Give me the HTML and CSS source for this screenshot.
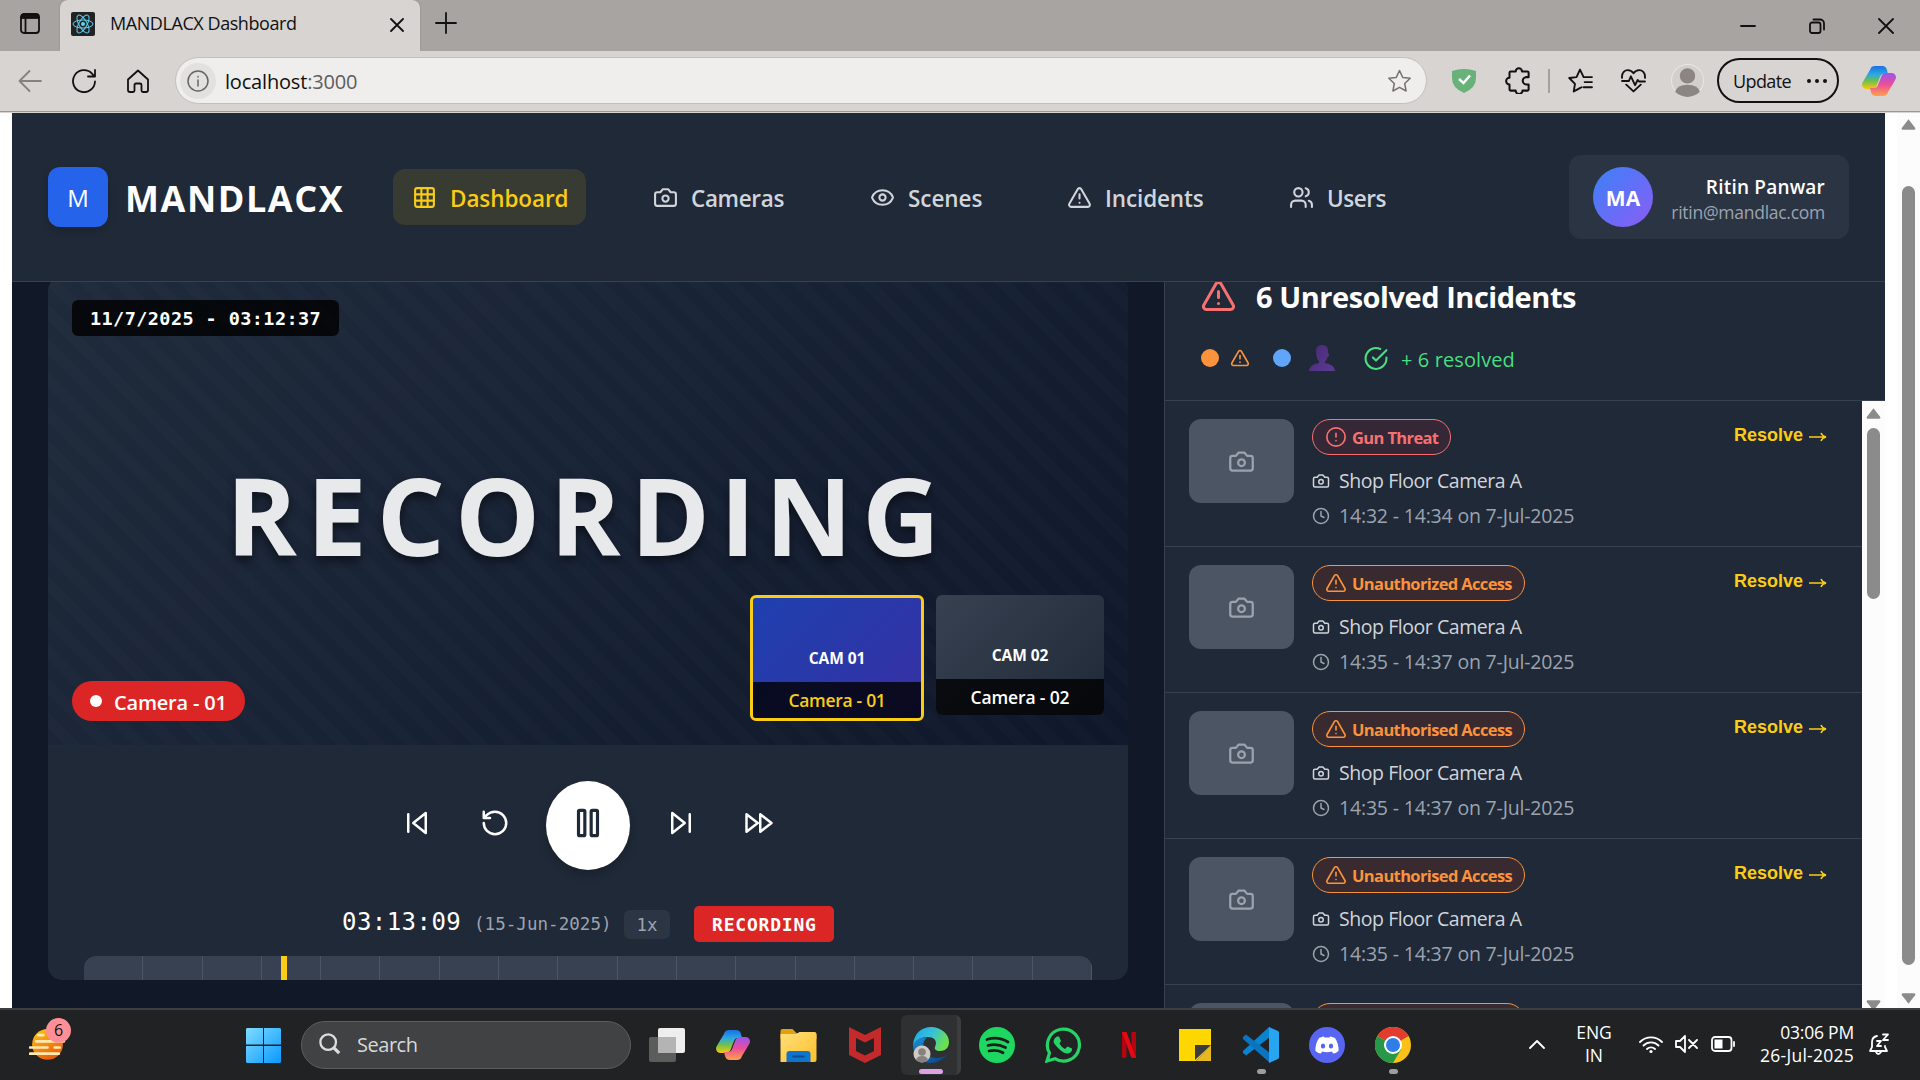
FILE: index.html
```html
<!DOCTYPE html>
<html lang="en">
<head>
<meta charset="utf-8">
<title>MANDLACX Dashboard</title>
<link rel="stylesheet" href="styles.css">
</head>
<body>
<svg class="defs" width="0" height="0">
  <defs>
    <linearGradient id="cpA" x1="0" y1="0" x2="0" y2="1"><stop offset="0" stop-color="#1b6fe0"/><stop offset=".35" stop-color="#2aa6e8"/><stop offset=".65" stop-color="#6fc04c"/><stop offset="1" stop-color="#fbc80c"/></linearGradient>
    <linearGradient id="cpB" x1="0" y1="0" x2="0" y2="1"><stop offset="0" stop-color="#9a54f0"/><stop offset=".5" stop-color="#ea4f97"/><stop offset="1" stop-color="#ffa14a"/></linearGradient>
    <linearGradient id="edA" x1="0" y1="0" x2="1" y2=".4"><stop offset="0" stop-color="#1ea7e8"/><stop offset=".55" stop-color="#35c1d8"/><stop offset="1" stop-color="#6be04f"/></linearGradient>
    <linearGradient id="edB" x1="0" y1="0" x2="1" y2="1"><stop offset="0" stop-color="#1a8fd8"/><stop offset="1" stop-color="#0c3f80"/></linearGradient>
    <linearGradient id="winG" x1="0" y1="0" x2="1" y2="1"><stop offset="0" stop-color="#7fdcff"/><stop offset="1" stop-color="#0a98ff"/></linearGradient>
    <linearGradient id="sunG" x1="0" y1="0" x2=".5" y2="1"><stop offset="0" stop-color="#ffc814"/><stop offset="1" stop-color="#e8600c"/></linearGradient>
    <linearGradient id="foldG" x1="0" y1="0" x2="1" y2="1"><stop offset="0" stop-color="#ffe07a"/><stop offset="1" stop-color="#ffbe2c"/></linearGradient>
    <linearGradient id="bustG" x1="0" y1="0" x2="1" y2="1"><stop offset="0" stop-color="#4a2a72"/><stop offset="1" stop-color="#5c3a94"/></linearGradient>
    <symbol id="camera" viewBox="0 0 24 24"><path d="M14.500 4h-5L7 7H4a2 2 0 0 0-2 2v9a2 2 0 0 0 2 2h16a2 2 0 0 0 2-2V9a2 2 0 0 0-2-2h-3l-2.500-3z"/><circle cx="12" cy="13" r="3"/></symbol>
    <symbol id="warn" viewBox="0 0 24 24"><path d="m21.730 18-8-14a2 2 0 0 0-3.480 0l-8 14A2 2 0 0 0 4 21h16a2 2 0 0 0 1.730-3z"/><path d="M12 9v4M12 17h.01"/></symbol>
    <symbol id="clock" viewBox="0 0 24 24"><circle cx="12" cy="12" r="10"/><path d="M12 6v6l4 2"/></symbol>
    <symbol id="alert" viewBox="0 0 24 24"><circle cx="12" cy="12" r="10"/><path d="M12 8v4M12 16h.01"/></symbol>
    <symbol id="copilot" viewBox="0 0 34 30"><path d="M8 4Q9 0 13 0h7q4 0 5 4l1 4h-4q-3 0-4 3l-3.500 9q-1.500 3-5 3H5q-5 0-5-5Q0 17 8 4z" fill="url(#cpA)"/><path d="M26 26q-1 4-5 4h-7q-4 0-5-4l-1-4h4q3 0 4-3l3.500-9q1.500-3 5-3H29q5 0 5 5 0 1-8 14z" fill="url(#cpB)"/></symbol>
  </defs>
</svg>

<div class="tabs">
  <svg class="ic tab-menu" viewBox="0 0 20 21"><rect x="1" y="1" width="18" height="19" rx="3"/><path d="M1 4.500h18M5.500 5v15"/><path d="M2 1.800h16v3H2z" fill="#111"/></svg>
  <div class="tab">
    <svg class="favicon" viewBox="0 0 24 24"><rect width="24" height="24" rx="2" fill="#222"/><g fill="none" stroke="#5fd3f3" stroke-width="1"><ellipse cx="12" cy="12" rx="10" ry="4"/><ellipse cx="12" cy="12" rx="10" ry="4" transform="rotate(60 12 12)"/><ellipse cx="12" cy="12" rx="10" ry="4" transform="rotate(120 12 12)"/></g><circle cx="12" cy="12" r="2" fill="#5fd3f3"/></svg>
    <span class="tab-title">MANDLACX Dashboard</span>
    <svg class="ic tab-close" viewBox="0 0 14 14"><path d="M1 1l12 12M13 1L1 13"/></svg>
  </div>
  <svg class="ic tab-new" viewBox="0 0 22 22"><path d="M11 1v20M1 11h20"/></svg>
  <div class="win-buttons">
    <svg class="ic" viewBox="0 0 16 16"><path d="M1 8h14"/></svg>
    <svg class="ic" viewBox="0 0 16 16"><rect x="1" y="4.500" width="10.500" height="10.500" rx="2"/><path d="M4.500 1.500h6.500a4 4 0 0 1 4 4v6"/></svg>
    <svg class="ic" viewBox="0 0 16 16"><path d="M1 1l14 14M15 1L1 15"/></svg>
  </div>
</div>

<div class="toolbar">
  <div class="nav-buttons">
    <svg class="ic faded" viewBox="0 0 24 24"><path d="M23 12H1.500M11.500 2L1.500 12l10 10"/></svg>
    <svg class="ic" viewBox="0 0 24 24"><path d="M23 12.500A11 11 0 1 1 20 4.600l2.500 2.900M23 1v6.500h-7"/></svg>
    <svg class="ic" viewBox="0 0 24 24"><path d="M2 10.500L12 1.500l10 9V21q0 2-2 2h-3q-1.500 0-1.500-1.500V16q0-1.500-1.500-1.500h-4Q8.500 14.500 8.500 16v5.500Q8.500 23 7 23H4q-2 0-2-2z"/></svg>
  </div>
  <div class="address">
    <span class="info"><svg class="ic" viewBox="0 0 22 22"><circle cx="11" cy="11" r="10"/><path d="M11 10v6M11 6.500v.6"/></svg></span>
    <span class="url">localhost<i>:3000</i></span>
    <svg class="ic star" viewBox="0 0 24 24"><path d="M12 1.500l3.200 6.900 7.500.9-5.500 5.200 1.400 7.500L12 18.300 5.400 22l1.400-7.500L1.300 9.300l7.500-.9z"/></svg>
  </div>
  <div class="extensions">
    <svg class="shield" viewBox="0 0 24 24"><path d="M0 2Q12-2 24 2v7q0 10-12 15Q0 19 0 9z" fill="#68b279"/><path d="M7 10l4.500 4L18 6.500" fill="none" stroke="#fff" stroke-width="2.500"/></svg>
    <svg class="ic puzzle" viewBox="0 0 24 24"><path d="M5 4h4.500a2.800 2.800 0 0 1 5.600 0H20q1 0 1 1v4h-2a3 3 0 0 0 0 6.500h2V20q0 1-1 1h-4.500a3 3 0 0 1-6 0H5q-1 0-1-1v-4.500a2.900 2.900 0 0 1 0-6V5q0-1 1-1z"/></svg>
    <span class="sep"></span>
    <svg class="ic favs" viewBox="0 0 24 24"><path d="M11 19.500L5.500 22.500l1.200-7.300L1.200 9.600l7-.9L11.500 1.500 15 8.700h8M16 13.500h7M15 18.500h8M11 19.500l2-1"/></svg>
    <svg class="ic heart" viewBox="0 0 24 24"><path d="M1 9.500C.5 4 4 2 6.500 2 9 2 11 3.500 12 5c1-1.500 3-3 5.500-3C20 2 23.500 4 23 9.500M1 12.500h6.500l2-4.500 4 8.500 2.500-5 1.500 1.500H23M5 16l7 6.500 7-6.500"/></svg>
    <svg class="profile" viewBox="0 0 32 32"><circle cx="16" cy="16" r="15.500" fill="#d3cfcc" stroke="#e9e6e4"/><circle cx="16" cy="11.500" r="7.500" fill="#8b8683"/><path d="M4 27q2-7 12-7t12 7q-5 5-12 5T4 27z" fill="#8b8683"/></svg>
    <span class="update">Update<i class="dots"></i></span>
    <svg class="copilot"><use href="#copilot"/></svg>
  </div>
</div>

<div class="page">
  <div class="app">
    <header class="header">
      <div class="logo">M</div>
      <div class="brand">MANDLACX</div>
      <nav class="nav">
        <a class="nav-item active n1"><svg class="lu" viewBox="0 0 24 24"><rect x="3" y="3" width="18" height="18" rx="2"/><path d="M3 9h18M3 15h18M9 3v18M15 3v18"/></svg><span>Dashboard</span></a>
        <a class="nav-item n2"><svg class="lu"><use href="#camera"/></svg><span>Cameras</span></a>
        <a class="nav-item n3"><svg class="lu" viewBox="0 0 24 24"><path d="M2.060 12.350a1 1 0 0 1 0-.7 10.750 10.750 0 0 1 19.880 0 1 1 0 0 1 0 .7 10.750 10.750 0 0 1-19.880 0"/><circle cx="12" cy="12" r="3"/></svg><span>Scenes</span></a>
        <a class="nav-item n4"><svg class="lu"><use href="#warn"/></svg><span>Incidents</span></a>
        <a class="nav-item n5"><svg class="lu" viewBox="0 0 24 24"><path d="M16 21v-2a4 4 0 0 0-4-4H6a4 4 0 0 0-4 4v2"/><circle cx="9" cy="7" r="4"/><path d="M22 21v-2a4 4 0 0 0-3-3.870M16 3.130a4 4 0 0 1 0 7.750"/></svg><span>Users</span></a>
      </nav>
      <div class="user">
        <div class="avatar">MA</div>
        <div class="user-text"><b>Ritin Panwar</b><span>ritin@mandlac.com</span></div>
      </div>
    </header>

    <main class="main">
      <section class="player-col">
        <div class="card">
          <div class="video">
            <div class="stamp">11/7/2025 - 03:12:37</div>
            <div class="rec-title">RECORDING</div>
            <div class="cam-pill"><i></i>Camera - 01</div>
            <div class="thumbs">
              <div class="thumb on"><b>CAM 01</b><span>Camera - 01</span></div>
              <div class="thumb"><b>CAM 02</b><span>Camera - 02</span></div>
            </div>
          </div>
          <div class="controls">
            <div class="buttons">
              <svg class="lu c1" viewBox="0 0 24 24"><path d="M19 20L9 12l10-8zM5 19V5"/></svg>
              <svg class="lu c2" viewBox="0 0 24 24"><path d="M3 12a9 9 0 1 0 9-9 9.750 9.750 0 0 0-6.740 2.740L3 8M3 3v5h5"/></svg>
              <div class="pause"><svg class="lu" viewBox="0 0 24 24"><rect x="14" y="4" width="4" height="16" rx=".8"/><rect x="6" y="4" width="4" height="16" rx=".8"/></svg></div>
              <svg class="lu c3" viewBox="0 0 24 24"><path d="M5 4l10 8-10 8zM19 5v14"/></svg>
              <svg class="lu c4" viewBox="0 0 24 24"><path d="M13 19l9-7-9-7zM2 19l9-7-9-7z"/></svg>
            </div>
            <div class="status">
              <span class="clock">03:13:09</span>
              <span class="date">(15-Jun-2025)</span>
              <span class="speed">1x</span>
              <span class="rec">RECORDING</span>
            </div>
            <div class="timeline"><i></i><i></i><i></i><i></i><i></i><i></i><i></i><i></i><i></i><i></i><i></i><i></i><i></i><i></i><i></i><i></i><i></i><b></b></div>
          </div>
        </div>
      </section>

      <aside class="panel">
        <div class="panel-head">
          <div class="panel-title"><svg class="lu"><use href="#warn"/></svg><span>6 Unresolved Incidents</span></div>
          <div class="summary">
            <i class="dot or"></i><svg class="lu sw"><use href="#warn"/></svg><i class="dot bl"></i>
            <svg class="bust" viewBox="0 0 26 26"><path d="M7 6q0-6 6-6t6 6v2q1 0 1 2t-1.500 2q-1 4-2.500 4.500V18q9 1 10 8H0q1-7 10-8v-1.500Q8 15 7.500 11z" fill="url(#bustG)"/></svg>
            <svg class="lu ck" viewBox="0 0 24 24"><path d="M22 11.080V12a10 10 0 1 1-5.930-9.140"/><path d="M22 4L12 14.010l-3-3"/></svg>
            <span class="resolved">+ 6 resolved</span>
          </div>
        </div>
        <div class="list-wrap">
          <div class="list">
            <article class="incident">
              <div class="shot"><svg class="lu"><use href="#camera"/></svg></div>
              <div class="info-col">
                <div class="badge red"><svg class="lu"><use href="#alert"/></svg><span>Gun Threat</span></div>
                <div class="line"><svg class="lu"><use href="#camera"/></svg><span>Shop Floor Camera A</span></div>
                <div class="line dim"><svg class="lu"><use href="#clock"/></svg><span>14:32 - 14:34 on 7-Jul-2025</span></div>
              </div>
              <a class="resolve">Resolve <svg viewBox="0 0 18 12"><path d="M0 6h16M12 2q1 3 5 4-4 1-5 4"/></svg></a>
            </article>
            <article class="incident">
              <div class="shot"><svg class="lu"><use href="#camera"/></svg></div>
              <div class="info-col">
                <div class="badge"><svg class="lu"><use href="#warn"/></svg><span>Unauthorized Access</span></div>
                <div class="line"><svg class="lu"><use href="#camera"/></svg><span>Shop Floor Camera A</span></div>
                <div class="line dim"><svg class="lu"><use href="#clock"/></svg><span>14:35 - 14:37 on 7-Jul-2025</span></div>
              </div>
              <a class="resolve">Resolve <svg viewBox="0 0 18 12"><path d="M0 6h16M12 2q1 3 5 4-4 1-5 4"/></svg></a>
            </article>
            <article class="incident">
              <div class="shot"><svg class="lu"><use href="#camera"/></svg></div>
              <div class="info-col">
                <div class="badge"><svg class="lu"><use href="#warn"/></svg><span>Unauthorised Access</span></div>
                <div class="line"><svg class="lu"><use href="#camera"/></svg><span>Shop Floor Camera A</span></div>
                <div class="line dim"><svg class="lu"><use href="#clock"/></svg><span>14:35 - 14:37 on 7-Jul-2025</span></div>
              </div>
              <a class="resolve">Resolve <svg viewBox="0 0 18 12"><path d="M0 6h16M12 2q1 3 5 4-4 1-5 4"/></svg></a>
            </article>
            <article class="incident">
              <div class="shot"><svg class="lu"><use href="#camera"/></svg></div>
              <div class="info-col">
                <div class="badge"><svg class="lu"><use href="#warn"/></svg><span>Unauthorised Access</span></div>
                <div class="line"><svg class="lu"><use href="#camera"/></svg><span>Shop Floor Camera A</span></div>
                <div class="line dim"><svg class="lu"><use href="#clock"/></svg><span>14:35 - 14:37 on 7-Jul-2025</span></div>
              </div>
              <a class="resolve">Resolve <svg viewBox="0 0 18 12"><path d="M0 6h16M12 2q1 3 5 4-4 1-5 4"/></svg></a>
            </article>
            <article class="incident">
              <div class="shot"></div>
              <div class="info-col"><div class="badge last"></div></div>
            </article>
          </div>
          <div class="scroll inner"><svg viewBox="0 0 16 11"><path d="M8 0l7 9q1 2-1 2H2Q0 11 1 9z"/></svg><i></i><svg viewBox="0 0 16 11"><path d="M8 11L1 2Q0 0 2 0h12q2 0 1 2z"/></svg></div>
        </div>
      </aside>
    </main>
  </div>
  <div class="scroll outer"><svg viewBox="0 0 16 11"><path d="M8 0l7 9q1 2-1 2H2Q0 11 1 9z"/></svg><i></i><svg viewBox="0 0 16 11"><path d="M8 11L1 2Q0 0 2 0h12q2 0 1 2z"/></svg></div>
</div>

<footer class="taskbar">
  <div class="weather">
    <svg viewBox="0 0 36 36"><circle cx="18" cy="16" r="15" fill="url(#sunG)"/><path d="M9 7h5M7 13h17M24 13h10M1 19h17M25 19h5M1 25h28" stroke="#ffe9b0" stroke-width="2.600" stroke-linecap="round"/></svg>
    <span>6</span>
  </div>
  <div class="apps">
    <svg class="start" viewBox="0 0 36 36"><path d="M1 0h16.500v17H0V1zM18.500 0H35l1 1v16H18.500zM0 18.500h17.500V36H1l-1-1zM18.500 18.500H36V35l-1 1H18.500z" fill="url(#winG)"/></svg>
    <div class="search"><svg viewBox="0 0 24 24"><circle cx="10" cy="10" r="8.500"/><path d="M16 16l6 6" stroke-width="3.500"/></svg><span>Search</span></div>
    <svg class="ap a1" viewBox="0 0 36 36"><rect x="9" y="1" width="27" height="25" rx="2" fill="#eee"/><rect x="0" y="10" width="27" height="25" rx="2" fill="#666" opacity=".85"/><path d="M9 10h18v16H9z" fill="#b4b4b4"/></svg>
    <svg class="ap a2"><use href="#copilot"/></svg>
    <svg class="ap a3" viewBox="0 0 36 36"><path d="M0 4q0-2 2-2h10l4 4h18q2 0 2 2v4H0z" fill="#e0a010"/><path d="M0 7h16l3-2h15q2 0 2 2v26q0 2-2 2H0z" fill="url(#foldG)"/><path d="M6 35V27q0-3 3-3h18q3 0 3 3v8z" fill="#0f74cc"/><path d="M12 29.500h12" stroke="#0a4c8c" stroke-width="2"/></svg>
    <svg class="ap a4" viewBox="0 0 34 36"><path d="M1 0l16 8L33 0v28l-16 8-16-8zM8 11v13l9 4.500 9-4.500V11l-9 4.500z" fill="#c4292b" fill-rule="evenodd"/></svg>
    <div class="edge"><svg viewBox="0 0 36 36"><path d="M0 18C1 6 9 0 18 0c10 0 18 7 18 15 0 6-4 9-9 9-4 0-6-2-5-4 3-6-1-10-7-10C8 10 3 13 0 18z" fill="url(#edA)"/><path d="M0 18c3-6 9-9 14-7-5 2-6 15 4 19 6 2 12 1 16-3-4 6-10 9-16 9C8 36 0 28 0 18z" fill="url(#edB)"/><circle cx="9" cy="27" r="8.500" fill="#cfcac6"/><circle cx="9" cy="25" r="3.800" fill="#86817e"/><path d="M3 33q1-4 6-4t6 4q-6 5-12 0z" fill="#86817e"/></svg><i></i></div>
    <svg class="ap a5" viewBox="0 0 36 36"><circle cx="18" cy="18" r="18" fill="#1ed760"/><path d="M8 12.500q11-3.500 21 2.500M9 18.500q9-2.500 17.500 2M10 24q8-2 14 1.800" fill="none" stroke="#1b1d1e" stroke-width="2.800" stroke-linecap="round"/></svg>
    <svg class="ap a6" viewBox="0 0 36 36"><path d="M2 34l2.500-8A16 16 0 1 1 10 31.700z" fill="none" stroke="#25d366" stroke-width="3.200"/><path d="M12 9.500l2 0 2 4.500-1.500 2.500q2 4 5.500 5.500l2.500-2.500 4.500 2q.5 4-4 5Q19 27 13 21T9 13q0-2 3-3.500z" fill="#25d366"/></svg>
    <svg class="ap a7" viewBox="0 0 14 26"><path d="M0 0h4.500v25.500L0 26zM9.500 0H14v26l-4.500-.5z" fill="#b1060f"/><path d="M0 0h4.500L14 26l-4.700-.5z" fill="#e50914"/></svg>
    <svg class="ap a8" viewBox="0 0 32 32"><path d="M0 0h32v16L17 32H0z" fill="#ffd700"/><path d="M16 16h16L16 31z" fill="#3c3c3c"/><path d="M32 16v16H17z" fill="#e8b820"/></svg>
    <div class="runs a9"><svg viewBox="0 0 36 36"><path d="M26 0L0 24l0 2 3 2.500L27 10z" fill="#0a84d0"/><path d="M0 10l3-2.500L27 26v10L0 12z" fill="#0a74c0"/><path d="M26 0l9 4q1 .5 1 2v24q0 1.500-1 2l-9 4V0z" fill="#27a5f0"/></svg><i></i></div>
    <svg class="ap a10" viewBox="0 0 36 36"><circle cx="18" cy="18" r="18" fill="#5865f2"/><path d="M10 11q4-2 5-1.500l.5 1h5l.5-1q1-.5 5 1.500 4 6 3.500 13-3 2.500-5.500 2.500l-1-2q-5 1.500-10 0l-1 2Q9.500 26.500 6.500 24 6 17 10 11z" fill="#fff"/><ellipse cx="14" cy="19" rx="2.200" ry="2.600" fill="#5865f2"/><ellipse cx="22" cy="19" rx="2.200" ry="2.600" fill="#5865f2"/></svg>
    <div class="runs a11"><svg viewBox="0 0 36 36"><circle cx="18" cy="18" r="18" fill="#fbc116"/><path d="M18 18L2.400 9A18 18 0 0 1 33.600 9z" fill="#e33b2e"/><path d="M2.400 9A18 18 0 0 0 18 36l8-13.500L18 18z" fill="#279847"/><circle cx="18" cy="18" r="9" fill="#fff"/><circle cx="18" cy="18" r="7" fill="#2f7de9"/></svg><i></i></div>
  </div>
  <div class="tray">
    <svg class="chev" viewBox="0 0 16 10"><path d="M1 9l7-7 7 7"/></svg>
    <div class="lang"><span>ENG</span><span>IN</span></div>
    <svg class="wifi" viewBox="0 0 24 19"><path d="M1 7a15.500 15.500 0 0 1 22 0M4.500 10.500a10.600 10.600 0 0 1 15 0M8 14a5.600 5.600 0 0 1 8 0"/><circle cx="12" cy="16.500" r="1.600" fill="#fff" stroke="none"/></svg>
    <svg class="vol" viewBox="0 0 24 18"><path d="M1 6h4l5-5v16l-5-5H1zM14 5l8 8M22 5l-8 8"/></svg>
    <svg class="bat" viewBox="0 0 24 16"><rect x="1" y="1" width="19.500" height="14" rx="3"/><path d="M23 6v4"/><rect x="3.500" y="3.500" width="8" height="9" fill="#fff" stroke="none"/></svg>
    <div class="when"><span class="time">03:06 PM</span><span class="day">26-Jul-2025</span></div>
    <svg class="bell" viewBox="0 0 22 23"><path d="M9 3Q4 4 4 9v5l-2 4h17l-2-4v-1M8 19q2 4 5 0M9 8h4l-4 5h4M15 1.500h5L15 7h5"/></svg>
  </div>
</footer>
</body>
</html>
```
FILE: styles.css
```css
* { box-sizing: border-box; }
body {
  margin: 0; width: 1920px; height: 1080px; overflow: hidden;
  display: flex; flex-direction: column; background: #fff;
  font-family: "Open Sans", "Noto Sans", sans-serif; font-size: 20px; color: #fff;
}
.defs { position: absolute; }
svg { display: block; flex: none; }
span, b { white-space: nowrap; }
i, em { font-style: normal; }
.ic { fill: none; stroke: #111; stroke-width: 1.8; stroke-linecap: round; stroke-linejoin: round; }
.lu { width: 25px; height: 25px; fill: none; stroke: currentColor; stroke-width: 2; stroke-linecap: round; stroke-linejoin: round; }

/* Browser tab strip */
.tabs { height: 51px; background: #a8a4a2; display: flex; align-items: center; padding-left: 20px; flex: none; }
.tab-menu { width: 20px; height: 21px; margin-top: -4px; }
.tab { width: 360px; height: 51px; margin-left: 20px; background: #d8d4d2; border-radius: 8px 8px 0 0; display: flex; align-items: center; padding: 0 17px 3px 11px; box-shadow: 0 0 2px #8c8886; }
.favicon { width: 24px; height: 24px; }
.tab-title { flex: 1; padding: 0 0 2px 15px; color: #111; font-size: 18px; line-height: 24px; letter-spacing: -.43px; }
.tab-close { width: 14px; height: 14px; margin: 2px -1px 0 0; }
.tab-new { width: 22px; height: 22px; margin: -5px 0 0 15px; }
.win-buttons { margin-left: auto; display: flex; gap: 53px; padding-right: 26px; }
.win-buttons svg { width: 16px; height: 16px; }

/* Browser toolbar */
.toolbar { height: 62px; background: #d8d4d2; display: flex; align-items: center; padding: 0 0 3px 18px; flex: none; box-shadow: inset 0 -1px #d8d4d2, inset 0 -2px #9c9896; }
.nav-buttons { display: flex; gap: 30px; width: 157px; }
.nav-buttons svg { width: 24px; height: 24px; }
.faded { stroke: #85817f; }
.address { width: 1252px; height: 47px; border: 1px solid #c3bfbd; border-radius: 24px; background: #efeeec; display: flex; align-items: center; padding: 0 14px 0 4px; }
.info { width: 36px; height: 36px; border-radius: 50%; background: #e3e1df; display: grid; place-items: center; }
.info svg { width: 22px; height: 22px; stroke: #666; stroke-width: 1.5; }
.url { padding: 1px 0 0 9px; flex: 1; color: #111; font-size: 20px; letter-spacing: -.18px; }
.url i { color: #5c5c5c; }
.star { width: 25px; height: 24px; stroke: #77736f; stroke-width: 1.5; }
.extensions { display: flex; align-items: center; padding-left: 25px; }
.shield { width: 24px; height: 24px; }
.puzzle { width: 27px; height: 27px; margin-left: 29px; }
.sep { width: 2px; height: 24px; background: #a5a19f; margin: 0 18px 0 16px; }
.favs { width: 25px; height: 25px; }
.heart { width: 25px; height: 25px; margin-left: 28px; }
.profile { width: 33px; height: 33px; margin-left: 25px; }
.update { width: 122px; height: 45px; margin-left: 13px; border: 2px solid #111; border-radius: 23px; display: flex; align-items: center; justify-content: space-between; padding: 0 10px 0 14px; color: #111; font-size: 18px; letter-spacing: -.6px; }
.dots { width: 4px; height: 4px; margin-right: 16px; border-radius: 50%; background: #111; box-shadow: 8px 0 #111, 16px 0 #111; }
.copilot { width: 34px; height: 30px; margin-left: 23px; }

/* Page frame */
.page { height: 895px; flex: none; display: flex; padding-left: 12px; }
.app { width: 1873px; background: #111827; display: flex; flex-direction: column; }
.header { height: 169px; flex: none; border-bottom: 1px solid #374151; background: #1f2937; display: flex; align-items: center; padding: 0 36px; }
.logo { width: 60px; height: 60px; border-radius: 12px; background: #2563eb; display: grid; place-items: center; font-size: 24px; box-shadow: 0 4px 6px rgba(0,0,0,.12); }
.brand { width: 285px; padding: 4px 0 0 17px; font-size: 36px; font-weight: 700; line-height: 50px; letter-spacing: 1.55px; }
.nav { display: flex; gap: 46px; }
.nav-item { height: 56px; display: flex; align-items: center; gap: 13px; padding-left: 19px; border-radius: 12px; color: #d1d5db; font-size: 22.500px; font-weight: 600; }
.nav-item span { padding-top: 2px; }
.nav-item.active { background: #373b32; color: #facc15; }
.n1 { width: 193px; letter-spacing: -.1px; }
.n2 { width: 171px; margin-left: 2px; letter-spacing: -.35px; }
.n3 { width: 151px; letter-spacing: -.05px; }
.n4 { width: 176px; letter-spacing: -.12px; }
.n5 { width: 140px; letter-spacing: -.45px; }
.user { width: 280px; height: 84px; margin-left: auto; border-radius: 12px; background: #2b3443; display: flex; align-items: center; padding: 0 24px; justify-content: space-between; }
.avatar { width: 60px; height: 60px; border-radius: 50%; background: linear-gradient(135deg, #3b82f6, #8b5cf6); display: grid; place-items: center; font-size: 21px; font-weight: 700; padding-top: 1px; }
.user-text { display: flex; flex-direction: column; align-items: flex-end; padding-top: 3px; line-height: 26px; }
.user-text b { font-size: 19px; font-weight: 600; line-height: 26px; letter-spacing: .2px; }
.user-text span { font-size: 17.500px; line-height: 24px; color: #9ca3af; letter-spacing: -.27px; }

/* Player */
.main { height: 726px; display: flex; overflow: hidden; }
.player-col { width: 1152px; padding: 0 36px; }
.card { width: 1080px; height: 703px; margin-top: -5px; border-radius: 14px; background: #1f2937; overflow: hidden; }
.video { position: relative; height: 468px; display: grid; place-items: center; background: repeating-linear-gradient(45deg, transparent 0 12px, rgba(255,255,255,.01) 12px 24px), linear-gradient(135deg, #1f2b3b 0%, #192336 45%, #0f172a 100%); }
.stamp { position: absolute; left: 24px; top: 23px; width: 267px; height: 36px; border-radius: 6px; background: rgba(0,0,0,.8); padding: 1px 0 0 18px; font: 700 18.500px/36px "DejaVu Sans Mono", monospace; letter-spacing: .42px; }
.rec-title { font-size: 107px; font-weight: 700; line-height: 120px; color: #e8e9ea; padding-top: 7px; letter-spacing: 10px; text-shadow: 0 5px 10px rgba(0,0,0,.5); }
.cam-pill { position: absolute; left: 24px; bottom: 24px; width: 173px; height: 40px; border-radius: 20px; background: #dc2626; display: flex; align-items: center; gap: 12px; padding: 2px 0 0 18px; font-size: 20px; font-weight: 600; letter-spacing: -.2px; white-space: nowrap; }
.cam-pill i { width: 12px; height: 12px; margin-top: -2px; border-radius: 50%; background: #fff; }
.thumbs { position: absolute; right: 24px; top: 318px; display: flex; align-items: flex-start; gap: 12px; }
.thumb { width: 168px; height: 120px; border-radius: 6px; overflow: hidden; background: linear-gradient(135deg, #374151, #1f2937); display: flex; flex-direction: column; }
.thumb b { flex: 1; padding-top: 46px; text-align: center; font-size: 15.500px; line-height: 28px; letter-spacing: -.1px; }
.thumb span { height: 36px; background: rgba(0,0,0,.8); text-align: center; font-size: 17.500px; font-weight: 600; line-height: 37px; letter-spacing: -.15px; }
.thumb.on { width: 174px; height: 126px; border: 3px solid #facc15; background: linear-gradient(135deg, #1e40af, #3730a3) padding-box; }
.thumb.on span { color: #facc15; letter-spacing: -.3px; }
.controls { padding: 36px 36px 0; }
.buttons { height: 89px; display: flex; align-items: center; padding-left: 318px; }
.buttons > .lu { width: 30px; height: 30px; margin-top: -5px; }
.buttons > .c2 { margin-left: 48px; }
.pause { width: 84px; height: 89px; margin-left: 36px; border-radius: 50%; background: #fff; color: #1f2937; display: grid; place-items: center; box-shadow: 0 5px 8px rgba(0,0,0,.2); padding-bottom: 5px; }
.pause .lu { width: 38px; height: 38px; }
.buttons > .c3 { margin-left: 36px; }
.buttons > .c4 { margin-left: 48px; }
.status { height: 86px; display: flex; align-items: center; padding: 22px 0 0 258px; font-family: "DejaVu Sans Mono", monospace; }
.clock { width: 132px; font-size: 24px; padding-bottom: 5px; letter-spacing: .45px; }
.date { width: 150px; font-size: 17.500px; color: #9ca3af; letter-spacing: .05px; }
.speed { width: 46px; height: 29px; border-radius: 6px; background: #2b3543; color: #9ca3af; text-align: center; font-size: 17.500px; line-height: 30px; margin-top: 1px; }
.rec { width: 140px; height: 36px; margin-left: 24px; border-radius: 5px; background: #dc2626; font-size: 18px; font-weight: 700; line-height: 37px; padding-left: 18px; letter-spacing: .8px; }
.timeline { position: relative; height: 40px; display: grid; grid-template-columns: repeat(17, 1fr); border-radius: 12px; overflow: hidden; background: #374151; }
.timeline i { border-right: 1px solid #4b5563; }
.timeline b { position: absolute; left: 197px; top: 0; width: 6px; height: 40px; background: #facc15; }

/* Incidents */
.panel { width: 721px; border-left: 1px solid #374151; background: #1f2937; display: flex; flex-direction: column; }
.panel-head { height: 119px; flex: none; border-bottom: 1px solid #374151; padding-left: 34px; }
.panel-title { height: 34px; display: flex; align-items: center; gap: 18px; font-size: 29px; font-weight: 700; margin-top: -3px; letter-spacing: -.46px; }
.panel-title .lu { width: 39px; height: 36px; color: #f87171; }
.panel-title span { line-height: 34px; margin-top: 2px; }
.summary { display: flex; align-items: center; padding-left: 2px; height: 34px; margin-top: 28px; }
.dot { width: 18px; height: 18px; border-radius: 50%; }
.or { background: #fb923c; } .bl { background: #60a5fa; }
.sw { width: 20px; height: 20px; margin: 0 23px 0 11px; color: #fb923c; }
.bust { width: 26px; height: 26px; margin-left: 18px; }
.ck { margin-left: 28px; width: 26px; color: #4ade80; }
.resolved { margin-left: 12px; padding-top: 2px; color: #4ade80; font-size: 20px; letter-spacing: .1px; }
.list-wrap { height: 607px; display: flex; overflow: hidden; }
.list { width: 697px; height: 607px; overflow: hidden; }
.incident { height: 146px; border-bottom: 1px solid #374151; display: flex; padding: 18px 0 0 24px; }
.shot { width: 105px; height: 84px; border-radius: 12px; background: #4b5563; color: #9ca3af; display: grid; place-items: center; }
.shot .lu { width: 29px; height: 27px; }
.info-col { width: 440px; padding-left: 18px; }
.badge { display: flex; align-items: center; width: max-content; height: 36px; padding: 0 12px 0 12px; gap: 5px; border: 1px solid #fb923c; border-radius: 18px; background: #382a2f; color: #fb923c; font-size: 16.500px; font-weight: 700; letter-spacing: -.63px; }
.badge span { padding-top: 1px; }
.badge.red { border-color: #f87171; background: #352735; color: #f87171; }
.badge .lu { width: 22px; height: 22px; stroke-width: 1.8; }
.badge.last { width: 213px; }
.line { display: flex; align-items: center; height: 27px; gap: 9px; margin-top: 13px; font-size: 19.500px; color: #d1d5db; letter-spacing: -.45px; }
.line .lu { width: 18px; height: 18px; margin-top: -2px; }
.line span { padding-bottom: 2px; }
.line.dim { margin-top: 8px; color: #9ca3af; letter-spacing: -.18px; }
.resolve { display: flex; align-items: center; gap: 6px; height: 24px; margin-top: 4px; color: #facc15; font: 700 18px/24px "Liberation Sans", sans-serif; }
.resolve svg { width: 18px; height: 12px; margin-top: 3px; fill: none; stroke: #facc15; stroke-width: 1.5; }

/* Scrollbars */
.scroll { background: #fcfcfc; display: flex; flex-direction: column; align-items: center; }
.scroll svg { width: 15px; height: 11px; fill: #8b8b8b; }
.scroll i { width: 13px; border-radius: 7px; background: #8b8b8b; }
.inner { width: 23px; height: 607px; padding-top: 7px; }
.inner i { height: 171px; margin: 9px 0 401px; flex: none; }
.outer { width: 23px; margin-left: 12px; padding: 6px 1px 0 0; height: 895px; }
.outer i { height: 779px; margin: 56px 0 28px; flex: none; }

/* Taskbar */
.taskbar { height: 72px; flex: none; background: #202224; border-top: 2px solid #3c3e40; display: flex; align-items: center; }
.weather { position: relative; width: 246px; padding-left: 29px; }
.weather svg { width: 37px; height: 37px; margin-top: 3px; }
.weather span { position: absolute; left: 46px; top: -7px; width: 25px; height: 25px; border-radius: 50%; background: #ff8f96; color: #111; font-size: 16px; line-height: 25px; text-align: center; }
.apps { display: flex; align-items: center; height: 70px; }
.start { width: 35px; height: 35px; }
.search { width: 330px; height: 48px; margin: 0 18px 0 20px; border: 1px solid #5b5d5f; border-radius: 24px; background: #404244; display: flex; align-items: center; gap: 16px; padding: 0 0 2px 17px; color: #d8d8d8; font-size: 20px; letter-spacing: -.47px; }
.search svg { width: 22px; height: 22px; fill: none; stroke: #ddd; stroke-width: 2.500; }
.ap { width: 36px; height: 36px; }
.a2 { width: 34px; height: 30px; margin-left: 31px; }
.a3 { width: 37px; margin-left: 30px; }
.a4 { width: 34px; margin-left: 31px; }
.edge { width: 60px; height: 60px; margin-left: 19px; border-radius: 6px; background: #2e3032; border-right: 4px solid #3b3d3f; display: grid; justify-content: center; padding: 12px 0 0 3px; position: relative; }
.edge svg { width: 36px; height: 36px; }
.edge i { position: absolute; left: 18px; bottom: 1px; width: 24px; height: 5px; border-radius: 3px; background: #dca3e4; }
.a5 { margin-left: 18px; } .a6 { margin-left: 30px; }
.a7 { width: 14px; height: 26px; margin-left: 41px; }
.a8 { width: 32px; height: 32px; margin-left: 43px; }
.runs { position: relative; width: 36px; height: 36px; }
.runs svg { width: 36px; height: 36px; }
.runs i { position: absolute; left: 14px; top: 42px; width: 9px; height: 5px; border-radius: 3px; background: #9b9d9f; }
.a9 { margin-left: 32px; } .a10 { margin-left: 30px; } .a11 { margin-left: 30px; }
.tray { margin-left: auto; display: flex; align-items: center; padding: 0 30px 2px 0; }
.tray svg { fill: none; stroke: #fff; stroke-width: 1.8; stroke-linecap: round; stroke-linejoin: round; }
.chev { width: 16px; height: 10px; }
.lang, .when { display: flex; flex-direction: column; font-size: 17.500px; line-height: 23.500px; }
.lang { width: 42px; margin-left: 28px; align-items: center; }
.wifi { width: 24px; height: 19px; margin-left: 24px; }
.vol { width: 24px; height: 18px; margin-left: 12px; }
.bat { width: 24px; height: 16px; margin-left: 12px; }
.when { width: 119px; align-items: flex-end; }
.time { letter-spacing: -.2px; }
.day { letter-spacing: .25px; }
.bell { width: 22px; height: 23px; margin-left: 14px; }
```
